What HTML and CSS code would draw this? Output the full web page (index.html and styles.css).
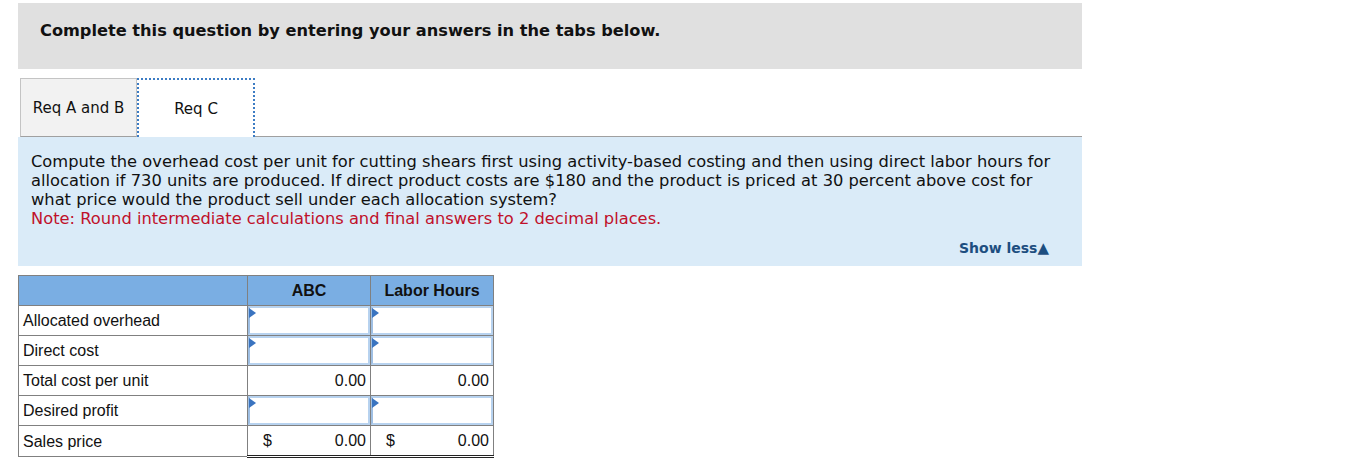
FILE: index.html
```html
<!DOCTYPE html>
<html>
<head>
<meta charset="utf-8">
<link rel="stylesheet" href="styles.css">
</head>
<body>
<div class="wrap">
  <div class="banner">Complete this question by entering your answers in the tabs below.</div>
  <div class="tabs">
    <div class="tab">Req A and B</div>
    <div class="tab active">Req C</div>
    <div class="tab-fill"></div>
  </div>
  <div class="panel">
    <p class="question">Compute the overhead cost per unit for cutting shears first using activity-based costing and then using direct labor hours for allocation if 730 units are produced. If direct product costs are $180 and the product is priced at 30 percent above cost for what price would the product sell under each allocation system?<br><span class="note">Note: Round intermediate calculations and final answers to 2 decimal places.</span></p>
    <div class="show-less">Show less<span class="tri">▲</span></div>
  </div>
  <table class="grid">
    <colgroup><col class="c1"><col class="c2"><col class="c3"></colgroup>
    <thead>
      <tr><th></th><th>ABC</th><th>Labor Hours</th></tr>
    </thead>
    <tbody>
      <tr><td class="label">Allocated overhead</td><td class="in"><div class="box"></div></td><td class="in"><div class="box"></div></td></tr>
      <tr><td class="label">Direct cost</td><td class="in"><div class="box"></div></td><td class="in"><div class="box"></div></td></tr>
      <tr><td class="label">Total cost per unit</td><td class="num">0.00</td><td class="num">0.00</td></tr>
      <tr><td class="label">Desired profit</td><td class="in"><div class="box"></div></td><td class="in"><div class="box"></div></td></tr>
      <tr class="last"><td class="label">Sales price</td><td class="num total"><span class="cur">$</span>0.00</td><td class="num total"><span class="cur">$</span>0.00</td></tr>
    </tbody>
  </table>
</div>
</body>
</html>
```
FILE: styles.css
```css
html, body { margin: 0; padding: 0; background: #fff; }
body { font-family: "DejaVu Sans", Verdana, sans-serif; color: #000; }
.wrap { margin-left: 18px; width: 1064px; padding-top: 3px; }

.banner {
  background: #e0e0e0;
  height: 66px;
  box-sizing: border-box;
  padding: 18px 0 0 22px;
  font-weight: bold;
  font-size: 16.2px;
  color: #111;
}

.tabs { display: flex; margin-top: 9px; height: 59px; padding-left: 2px; }
.tab {
  box-sizing: border-box;
  width: 117px;
  height: 59px;
  display: flex; align-items: center; justify-content: center;
  font-size: 15px;
  color: #111;
  background: #f2f2f2;
  border: 1px solid #c4c4c4;
  border-bottom: 1px solid #a0a0a0;
}
.tab.active {
  width: 118px;
  background: #fff;
  border: 2px dotted #3c7cc4;
  border-bottom: none;
}
.tab-fill { flex: 1; border-bottom: 1px solid #a0a0a0; }

.panel {
  background: #daebf8;
  height: 129px;
  box-sizing: border-box;
  padding: 15px 18px 0 13px;
}
.question {
  margin: 0;
  font-size: 16.3px;
  line-height: 19px;
  color: #111;
}
.note { color: #c0112b; }
.show-less {
  text-align: right;
  margin-top: 11px;
  padding-right: 15px;
  font-weight: bold;
  font-size: 14px;
  color: #1d4e80;
}
.tri { font-size: 15px; font-family: "DejaVu Sans", sans-serif; }

.grid {
  margin-top: 9px;
  border-collapse: collapse;
  font-family: "Liberation Sans", Arial, sans-serif;
  font-size: 16px;
  color: #111;
}
.c1 { width: 229px; } .c2 { width: 123px; } .c3 { width: 123px; }
.grid th, .grid td { border: 1px solid #808080; padding: 0; }
.grid th {
  background: #7aaee3;
  height: 29px;
  font-weight: bold;
  font-size: 16px;
  text-align: center;
}
.grid td { height: 28px; padding-top: 1px; }
.label { padding-left: 4px !important; }
.grid td.in { padding: 0; height: 29px; }
.box {
  position: relative;
  box-sizing: border-box;
  height: 29px;
  margin: 0;
  background: #fff;
  border: 2px solid #b7d2ef;
  border-left-color: #9fbfe3;
}
.box::before {
  content: "";
  position: absolute;
  left: -1px; top: 0;
  border-top: 5px solid transparent;
  border-bottom: 5px solid transparent;
  border-left: 7px solid #3a74c0;
}
.num { text-align: right; padding-right: 4px !important; }
.cur { float: left; padding-left: 15px; }
.last td.total { border-bottom: 3px double #222; }
```
